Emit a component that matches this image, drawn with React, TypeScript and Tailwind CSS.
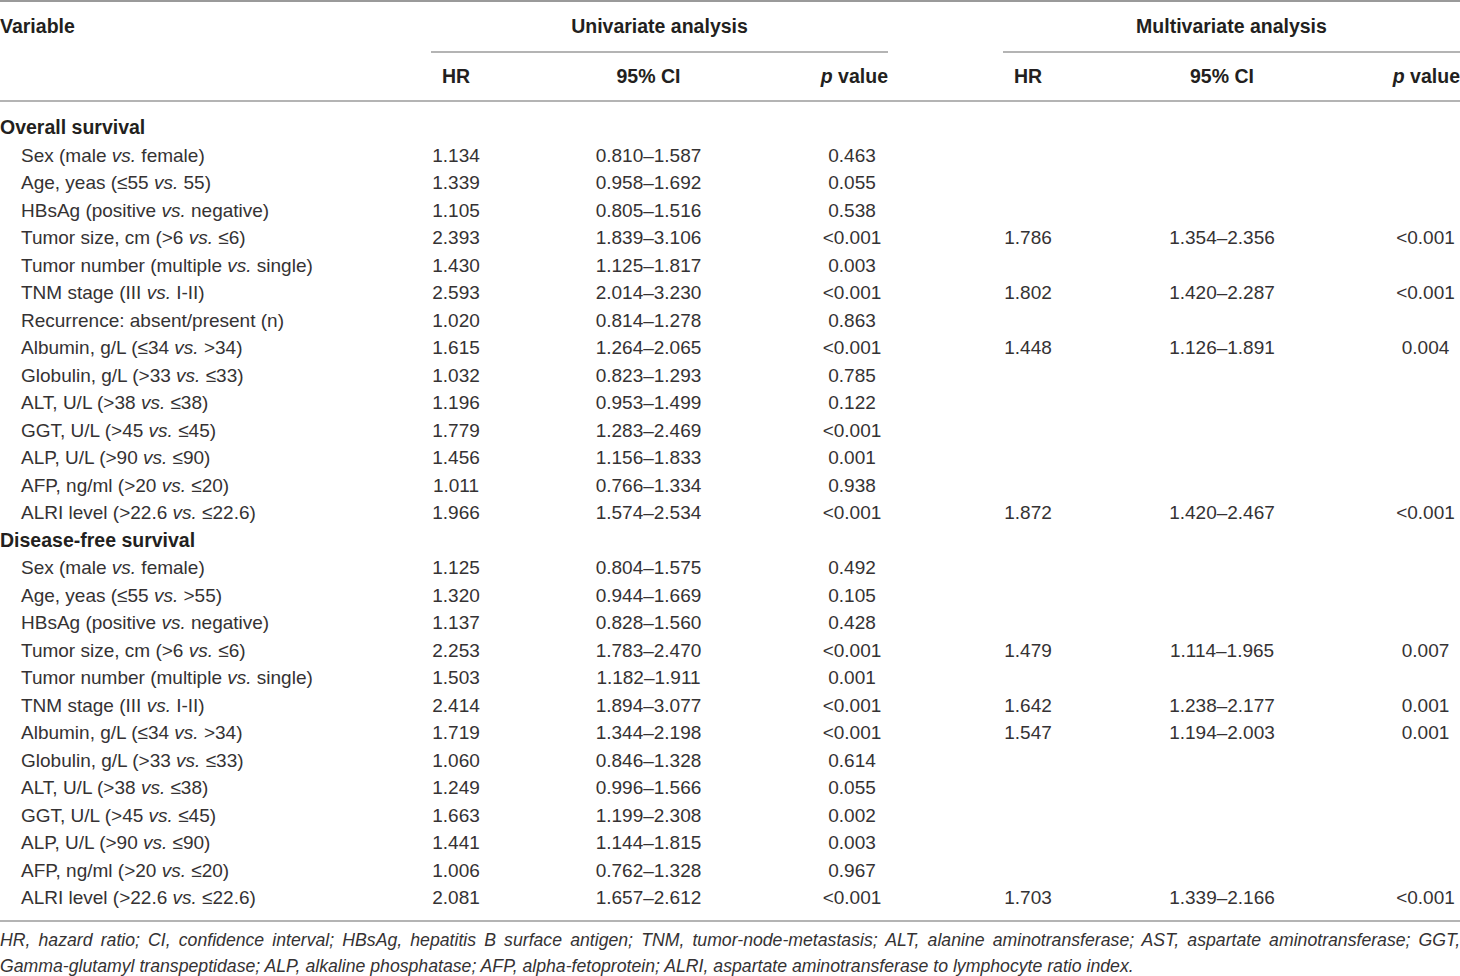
import React from "react";

type Row = { label: React.ReactNode; u: [string, string, string]; m?: [string, string, string] };

const vs = <i>vs.</i>;

const overall: Row[] = [
  { label: <>Sex (male {vs} female)</>, u: ["1.134", "0.810–1.587", "0.463"] },
  { label: <>Age, yeas (≤55 {vs} 55)</>, u: ["1.339", "0.958–1.692", "0.055"] },
  { label: <>HBsAg (positive {vs} negative)</>, u: ["1.105", "0.805–1.516", "0.538"] },
  { label: <>Tumor size, cm (&gt;6 {vs} ≤6)</>, u: ["2.393", "1.839–3.106", "<0.001"], m: ["1.786", "1.354–2.356", "<0.001"] },
  { label: <>Tumor number (multiple {vs} single)</>, u: ["1.430", "1.125–1.817", "0.003"] },
  { label: <>TNM stage (III {vs} I-II)</>, u: ["2.593", "2.014–3.230", "<0.001"], m: ["1.802", "1.420–2.287", "<0.001"] },
  { label: <>Recurrence: absent/present (n)</>, u: ["1.020", "0.814–1.278", "0.863"] },
  { label: <>Albumin, g/L (≤34 {vs} &gt;34)</>, u: ["1.615", "1.264–2.065", "<0.001"], m: ["1.448", "1.126–1.891", "0.004"] },
  { label: <>Globulin, g/L (&gt;33 {vs} ≤33)</>, u: ["1.032", "0.823–1.293", "0.785"] },
  { label: <>ALT, U/L (&gt;38 {vs} ≤38)</>, u: ["1.196", "0.953–1.499", "0.122"] },
  { label: <>GGT, U/L (&gt;45 {vs} ≤45)</>, u: ["1.779", "1.283–2.469", "<0.001"] },
  { label: <>ALP, U/L (&gt;90 {vs} ≤90)</>, u: ["1.456", "1.156–1.833", "0.001"] },
  { label: <>AFP, ng/ml (&gt;20 {vs} ≤20)</>, u: ["1.011", "0.766–1.334", "0.938"] },
  { label: <>ALRI level (&gt;22.6 {vs} ≤22.6)</>, u: ["1.966", "1.574–2.534", "<0.001"], m: ["1.872", "1.420–2.467", "<0.001"] },
];

const dfs: Row[] = [
  { label: <>Sex (male {vs} female)</>, u: ["1.125", "0.804–1.575", "0.492"] },
  { label: <>Age, yeas (≤55 {vs} &gt;55)</>, u: ["1.320", "0.944–1.669", "0.105"] },
  { label: <>HBsAg (positive {vs} negative)</>, u: ["1.137", "0.828–1.560", "0.428"] },
  { label: <>Tumor size, cm (&gt;6 {vs} ≤6)</>, u: ["2.253", "1.783–2.470", "<0.001"], m: ["1.479", "1.114–1.965", "0.007"] },
  { label: <>Tumor number (multiple {vs} single)</>, u: ["1.503", "1.182–1.911", "0.001"] },
  { label: <>TNM stage (III {vs} I-II)</>, u: ["2.414", "1.894–3.077", "<0.001"], m: ["1.642", "1.238–2.177", "0.001"] },
  { label: <>Albumin, g/L (≤34 {vs} &gt;34)</>, u: ["1.719", "1.344–2.198", "<0.001"], m: ["1.547", "1.194–2.003", "0.001"] },
  { label: <>Globulin, g/L (&gt;33 {vs} ≤33)</>, u: ["1.060", "0.846–1.328", "0.614"] },
  { label: <>ALT, U/L (&gt;38 {vs} ≤38)</>, u: ["1.249", "0.996–1.566", "0.055"] },
  { label: <>GGT, U/L (&gt;45 {vs} ≤45)</>, u: ["1.663", "1.199–2.308", "0.002"] },
  { label: <>ALP, U/L (&gt;90 {vs} ≤90)</>, u: ["1.441", "1.144–1.815", "0.003"] },
  { label: <>AFP, ng/ml (&gt;20 {vs} ≤20)</>, u: ["1.006", "0.762–1.328", "0.967"] },
  { label: <>ALRI level (&gt;22.6 {vs} ≤22.6)</>, u: ["2.081", "1.657–2.612", "<0.001"], m: ["1.703", "1.339–2.166", "<0.001"] },
];

const GRID = "grid grid-cols-[431px_50px_335px_72px_115px_50px_338px_69px]";

function DataRow({ r }: { r: Row }) {
  return (
    <div className={`${GRID} h-[27.5px] items-center whitespace-nowrap`}>
      <div className="pl-[21px]">{r.label}</div>
      <div className="flex justify-center">{r.u[0]}</div>
      <div className="flex justify-center">{r.u[1]}</div>
      <div className="flex justify-center">{r.u[2]}</div>
      <div />
      <div className="flex justify-center">{r.m ? r.m[0] : ""}</div>
      <div className="flex justify-center">{r.m ? r.m[1] : ""}</div>
      <div className="flex justify-center">{r.m ? r.m[2] : ""}</div>
    </div>
  );
}

function Section({ title, rows }: { title: string; rows: Row[] }) {
  return (
    <>
      <div className="h-[27.5px] flex items-center font-bold text-[19.5px] text-[#231f20]">{title}</div>
      {rows.map((r, i) => (
        <DataRow key={i} r={r} />
      ))}
    </>
  );
}

function SubHead({ last }: { last: string }) {
  return (
    <div className={`border-t-2 border-[#b4b4b4] h-full grid ${last} items-center`}>
      <div className="flex justify-center">HR</div>
      <div className="flex justify-center">95% CI</div>
      <div className="flex justify-end whitespace-nowrap">
        <i>p</i>&nbsp;value
      </div>
    </div>
  );
}

export default function App() {
  return (
    <div className="w-[1460px] h-[976px] bg-white overflow-hidden text-[19px] text-[#353233] leading-none font-['Liberation_Sans',Arial,sans-serif]">
      <div className="border-t-2 border-[#9a9a9a]" />
      <div className="border-b-2 border-[#b4b4b4]">
        <div className={`${GRID} h-[48px] pt-[2px] items-center font-bold text-[19.5px] text-[#231f20]`}>
          <div>Variable</div>
          <div className="col-span-3 flex justify-center">Univariate analysis</div>
          <div />
          <div className="col-span-3 flex justify-center">Multivariate analysis</div>
        </div>
        <div className="grid grid-cols-[431px_457px_115px_457px] h-[50px] pt-[1px] font-bold text-[19.5px] text-[#231f20]">
          <div />
          <SubHead last="grid-cols-[50px_335px_72px]" />
          <div />
          <SubHead last="grid-cols-[50px_338px_69px]" />
        </div>
      </div>
      <div className="pt-[12px] pb-[8px] border-b-2 border-[#b4b4b4]">
        <Section title="Overall survival" rows={overall} />
        <Section title="Disease-free survival" rows={dfs} />
      </div>
      <div className="pt-[5px] w-[1529px] origin-left scale-x-[0.955] italic text-[18.5px] leading-[26px] text-[#353233] font-['Liberation_Sans',Arial,sans-serif]">
        <div className="text-justify [text-align-last:justify]">
          HR, hazard ratio; CI, confidence interval; HBsAg, hepatitis B surface antigen; TNM, tumor-node-metastasis; ALT, alanine aminotransferase; AST, aspartate aminotransferase; GGT,
        </div>
        <div>
          Gamma-glutamyl transpeptidase; ALP, alkaline phosphatase; AFP, alpha-fetoprotein; ALRI, aspartate aminotransferase to lymphocyte ratio index.
        </div>
      </div>
    </div>
  );
}
